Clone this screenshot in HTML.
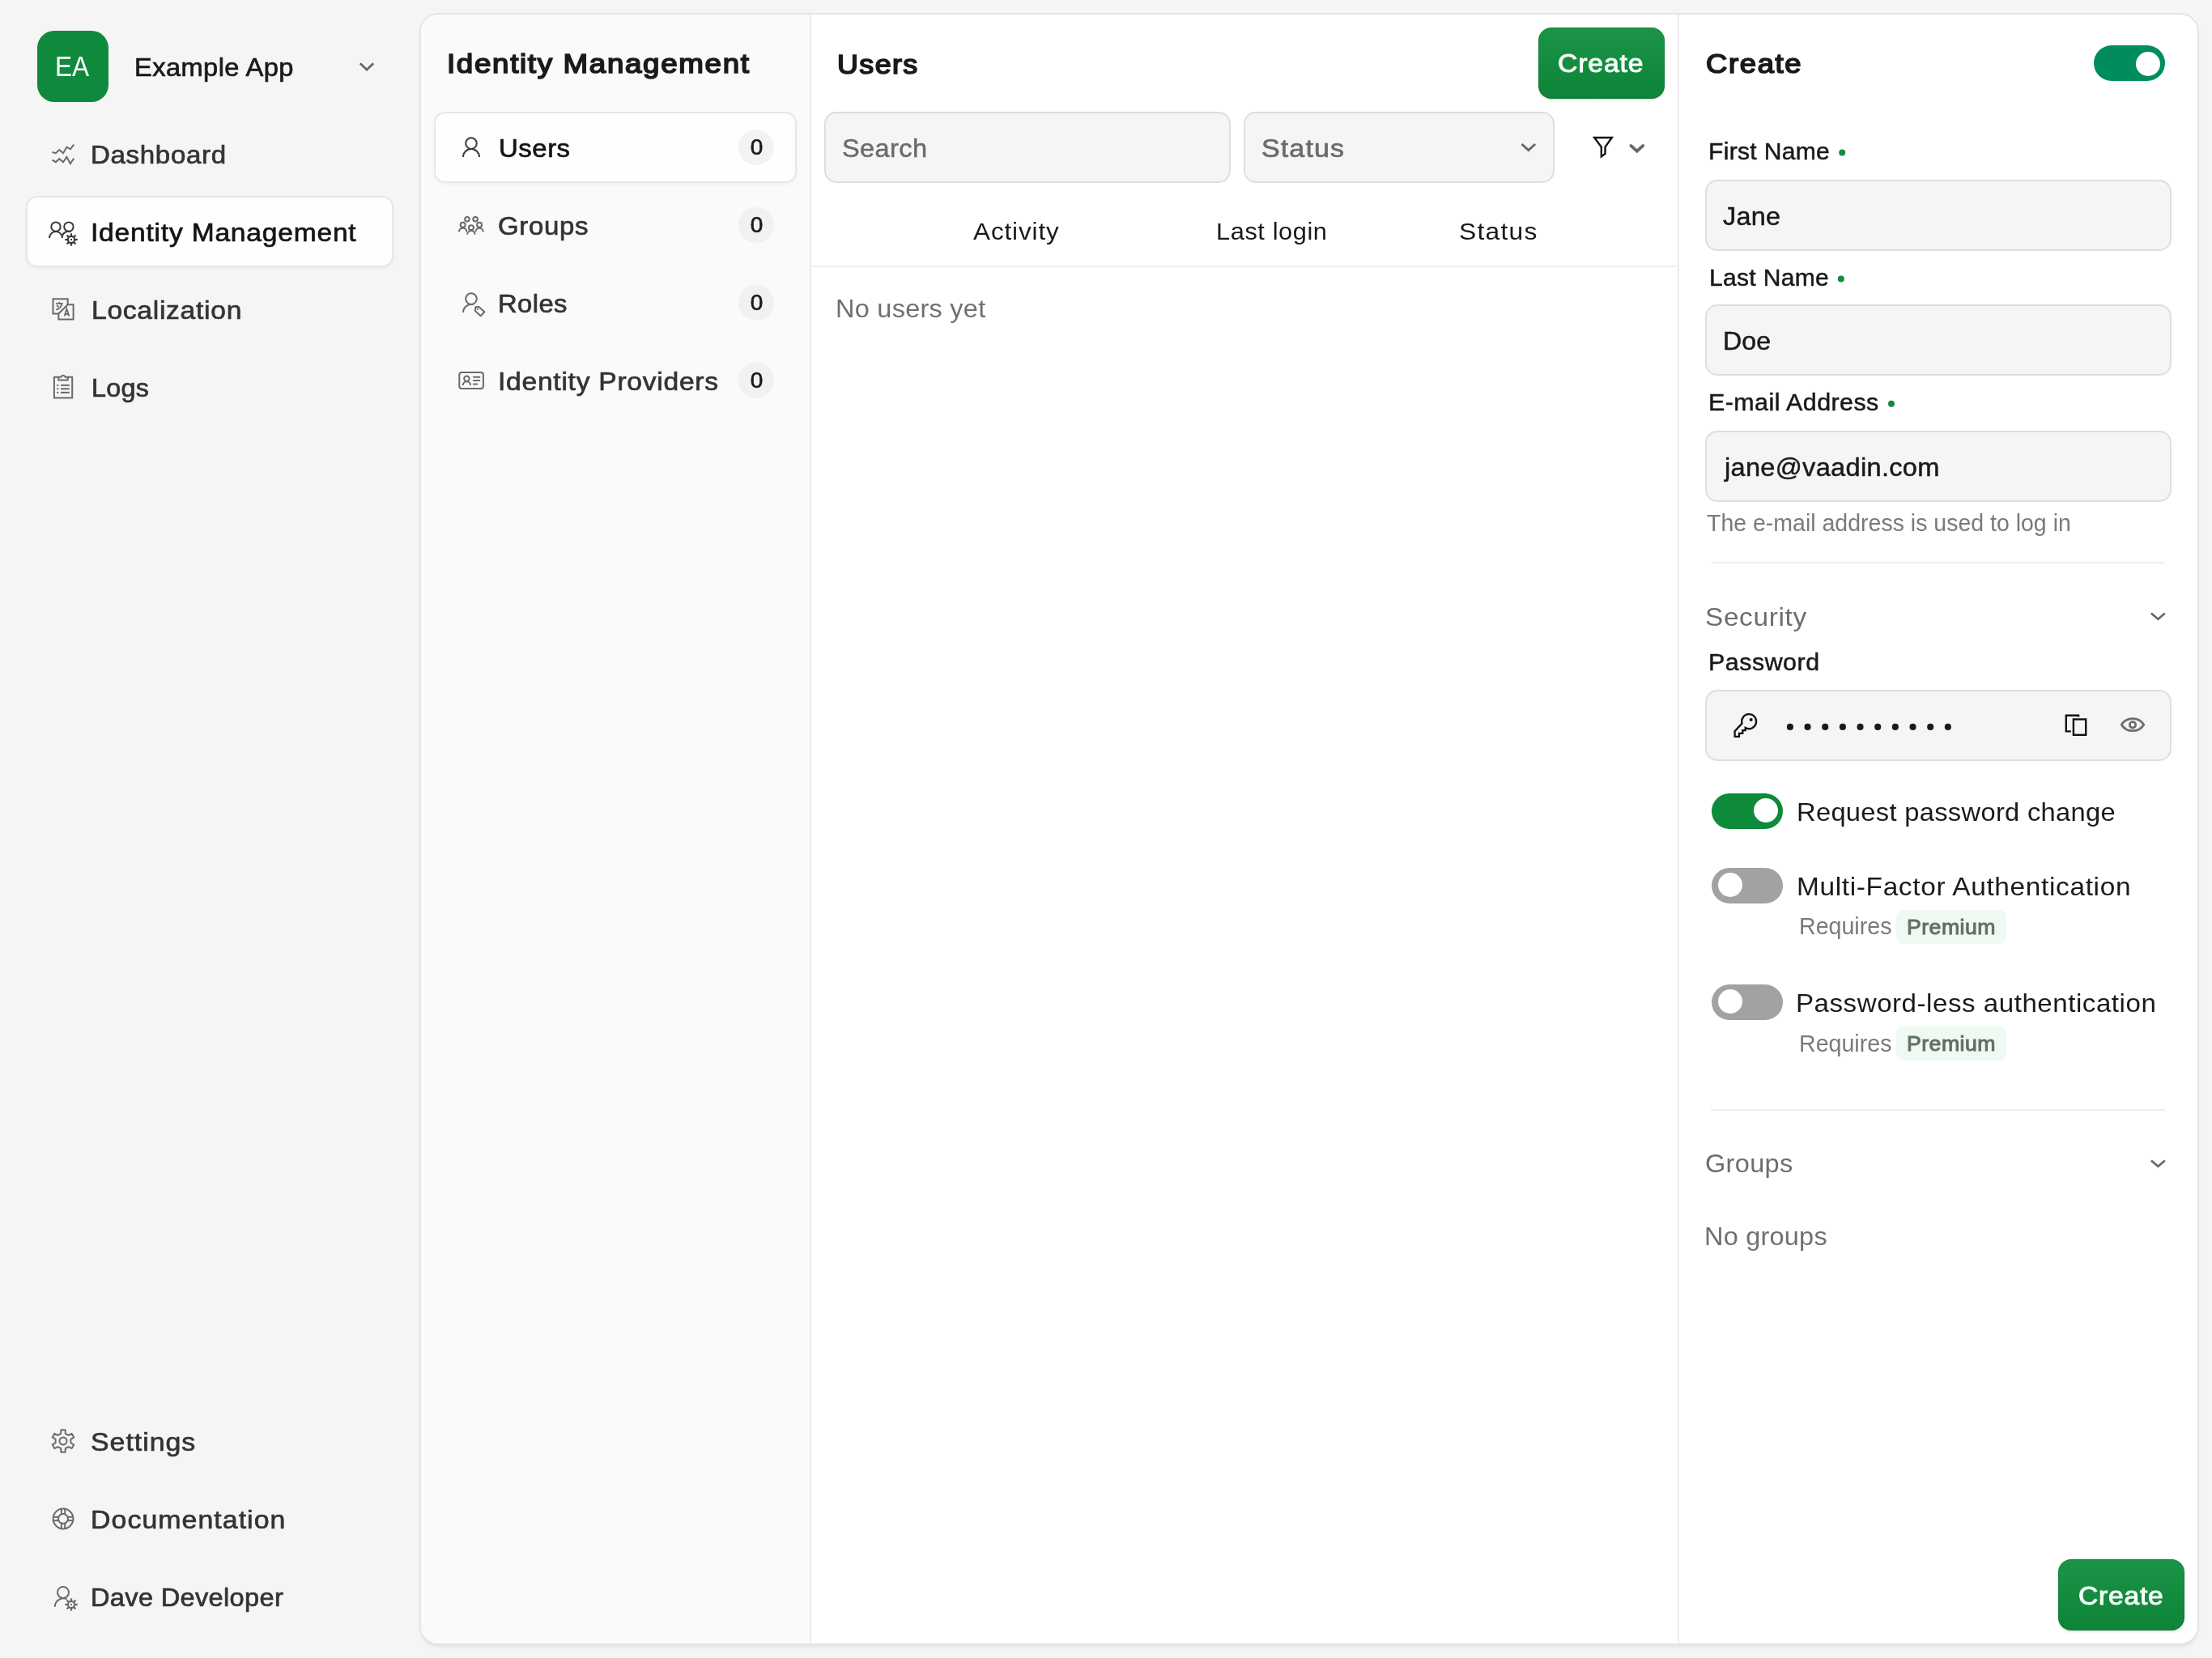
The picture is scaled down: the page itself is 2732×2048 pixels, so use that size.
<!DOCTYPE html>
<html lang="en"><head><meta charset="utf-8"><title>Identity Management – Users</title>
<style>
html,body{margin:0;padding:0}
body{width:2732px;height:2048px;overflow:hidden;background:#f5f5f5;position:relative;
 font-family:"Liberation Sans",sans-serif;-webkit-font-smoothing:antialiased}
.txt{position:absolute;left:0;top:0;width:2732px;height:2048px;will-change:transform}
.t{position:absolute;white-space:nowrap;transform-origin:0 50%;line-height:48px;height:48px;font-kerning:normal}
.sw{-webkit-text-stroke:0.7px currentColor}
.sl{-webkit-text-stroke:0.5px currentColor}
.sb{-webkit-text-stroke:1.0px currentColor}
.sbb{-webkit-text-stroke:1.0px currentColor}
.st{-webkit-text-stroke:1.7px currentColor}
.abs{position:absolute;box-sizing:border-box}
.main{left:518px;top:16px;width:2198px;height:2016px;background:#fff;border:2px solid #e4e4e4;border-radius:23px;
 box-shadow:0 4px 5px -2px rgba(0,0,0,.09);overflow:hidden}
.subnav{left:0;top:0;width:482px;height:2012px;background:#fafafa;border-right:2px solid #ebebeb}
.vdiv{width:2px;background:#ebebeb}
.hdiv{height:2px;background:#eeeeee}
.sel{background:#fefefe;border:2px solid #e7e7e7;border-radius:14px;box-shadow:0 2px 4px rgba(0,0,0,.04)}
.badge{width:44px;height:44px;border-radius:22px;background:#f1f1f1}
.inp{background:#f5f5f5;border:2px solid #dedede;border-radius:15px}
.btn{border-radius:16px;background:linear-gradient(#1b9447,#0d8437);box-shadow:0 2px 3px rgba(0,0,0,.10), inset 0 0 0 1px rgba(0,60,20,.16)}
.tog{width:88px;height:44px;border-radius:22px}
.knob{width:30px;height:30px;border-radius:15px;background:#fff}
.prem{background:#eff8f1;border-radius:9px}
svg{position:absolute;left:0;top:0}
</style></head>
<body>
<div class="abs " style="left:46px;top:38px;width:88px;height:88px;background:#0f8a3c;border-radius:21px;"></div>
<div class="abs sel" style="left:32px;top:242px;width:454px;height:88px;"></div>
<div class="abs main"><div class="abs subnav"></div></div>
<div class="abs sel" style="left:536px;top:138px;width:448px;height:88px;"></div>
<div class="abs badge" style="left:912px;top:159.5px;background:#f3f3f3;"></div>
<div class="abs badge" style="left:912px;top:255.5px;background:#f1f1f1;"></div>
<div class="abs badge" style="left:912px;top:351.5px;background:#f1f1f1;"></div>
<div class="abs badge" style="left:912px;top:447.5px;background:#f1f1f1;"></div>
<div class="abs vdiv" style="left:2072px;top:18px;width:2px;height:2012px;"></div>
<div class="abs btn" style="left:1900px;top:34px;width:156px;height:88px;"></div>
<div class="abs inp" style="left:1018px;top:138px;width:502px;height:88px;"></div>
<div class="abs inp" style="left:1536px;top:138px;width:384px;height:88px;"></div>
<div class="abs hdiv" style="left:1002px;top:328px;width:1070px;height:2px;"></div>
<div class="abs tog" style="left:2586px;top:56px;background:#008c5f;"></div>
<div class="abs knob" style="left:2638px;top:64px;"></div>
<div class="abs inp" style="left:2106px;top:222px;width:576px;height:88px;"></div>
<div class="abs inp" style="left:2106px;top:376px;width:576px;height:88px;"></div>
<div class="abs inp" style="left:2106px;top:532px;width:576px;height:88px;"></div>
<div class="abs hdiv" style="left:2113px;top:694px;width:561px;height:2px;"></div>
<div class="abs inp" style="left:2106px;top:852px;width:576px;height:88px;"></div>
<div class="abs tog" style="left:2114px;top:980px;background:#0d8a3a;"></div>
<div class="abs knob" style="left:2166px;top:986px;"></div>
<div class="abs tog" style="left:2114px;top:1072px;background:#a2a2a2;"></div>
<div class="abs knob" style="left:2122px;top:1078px;"></div>
<div class="abs prem" style="left:2342px;top:1124px;width:136px;height:42px;"></div>
<div class="abs tog" style="left:2114px;top:1216px;background:#a2a2a2;"></div>
<div class="abs knob" style="left:2122px;top:1222px;"></div>
<div class="abs prem" style="left:2342px;top:1268.4px;width:136px;height:42px;"></div>
<div class="abs hdiv" style="left:2113px;top:1370px;width:561px;height:2px;"></div>
<div class="abs btn" style="left:2542px;top:1926px;width:156px;height:88px;"></div>
<svg width="2732" height="2048" viewBox="0 0 2732 2048">
<polyline points="64.5,188.0 68.8,189.2 73.3,185.0 78.0,189.2 82.4,181.7 86.9,184.3 91.2,178.6" fill="none" stroke="#6a6a6a" stroke-width="2" stroke-linejoin="miter"/>
<polyline points="64.5,197.6 68.8,200.2 73.3,196.2 78.0,200.3 82.4,194.0 86.9,202.0 91.2,195.6" fill="none" stroke="#6a6a6a" stroke-width="2" stroke-linejoin="miter"/>
<circle cx="69" cy="280.1" r="5.7" fill="none" stroke="#3a3a3a" stroke-width="2"/>
<circle cx="84.9" cy="280.1" r="5.7" fill="none" stroke="#3a3a3a" stroke-width="2"/>
<path d="M61,294 A8,8 0 0 1 77,294" fill="none" stroke="#3a3a3a" stroke-width="2"/>
<path d="M76.9,291.2 A8,8 0 0 1 87.5,286.4" fill="none" stroke="#3a3a3a" stroke-width="2"/>
<circle cx="88.0" cy="296.0" r="4.1" fill="none" stroke="#3a3a3a" stroke-width="2.1"/><rect x="87.0" y="295.0" width="2" height="2" fill="#3a3a3a"/><line x1="92.60" y1="296.00" x2="95.70" y2="296.00" stroke="#3a3a3a" stroke-width="2.2"/><line x1="91.25" y1="299.25" x2="93.44" y2="301.44" stroke="#3a3a3a" stroke-width="2.2"/><line x1="88.00" y1="300.60" x2="88.00" y2="303.70" stroke="#3a3a3a" stroke-width="2.2"/><line x1="84.75" y1="299.25" x2="82.56" y2="301.44" stroke="#3a3a3a" stroke-width="2.2"/><line x1="83.40" y1="296.00" x2="80.30" y2="296.00" stroke="#3a3a3a" stroke-width="2.2"/><line x1="84.75" y1="292.75" x2="82.56" y2="290.56" stroke="#3a3a3a" stroke-width="2.2"/><line x1="88.00" y1="291.40" x2="88.00" y2="288.30" stroke="#3a3a3a" stroke-width="2.2"/><line x1="91.25" y1="292.75" x2="93.44" y2="290.56" stroke="#3a3a3a" stroke-width="2.2"/>
<path d="M65.5,369.3 H83.7 V376.2 H90.6 V394.4 H72.3 V387.5 H65.5 Z" fill="none" stroke="#6a6a6a" stroke-width="2"/>
<path d="M83.7,376.2 L72.3,387.5" fill="none" stroke="#6a6a6a" stroke-width="2"/>
<path d="M79.6,390.6 L82.4,381.4 L85.4,390.6 M80.6,388 H84.4" fill="none" stroke="#6a6a6a" stroke-width="1.8"/>
<path d="M69.2,374.8 H77.8 M73.4,373 V374.8 M70,377 L72.5,379.2 M76.3,375 C76,379 73,381.6 69.2,382.6" fill="none" stroke="#6a6a6a" stroke-width="1.8"/>
<path d="M72.3,465.8 H66.9 V491.5 H89.2 V465.8 H83.7" fill="none" stroke="#6a6a6a" stroke-width="2"/>
<path d="M72.3,465.8 V469.6 H83.7 V465.8 H80.6 A2.7,2.7 0 0 0 75.4,465.8 Z" fill="none" stroke="#6a6a6a" stroke-width="2"/>
<rect x="70.2" y="474.9" width="2" height="2" fill="#6a6a6a"/>
<line x1="75" y1="475.9" x2="85.8" y2="475.9" stroke="#6a6a6a" stroke-width="2"/>
<rect x="70.2" y="479.3" width="2" height="2" fill="#6a6a6a"/>
<line x1="75" y1="480.3" x2="85.8" y2="480.3" stroke="#6a6a6a" stroke-width="2"/>
<rect x="70.2" y="483.9" width="2" height="2" fill="#6a6a6a"/>
<line x1="75" y1="484.9" x2="85.8" y2="484.9" stroke="#6a6a6a" stroke-width="2"/>
<path d="M75.16,1770.83 L75.42,1766.24 L80.58,1766.24 L80.84,1770.83 L84.52,1772.96 L88.63,1770.89 L91.21,1775.35 L87.36,1777.87 L87.36,1782.13 L91.21,1784.65 L88.63,1789.11 L84.52,1787.04 L80.84,1789.17 L80.58,1793.76 L75.42,1793.76 L75.16,1789.17 L71.48,1787.04 L67.37,1789.11 L64.79,1784.65 L68.64,1782.13 L68.64,1777.87 L64.79,1775.35 L67.37,1770.89 L71.48,1772.96Z" fill="none" stroke="#6a6a6a" stroke-width="2" stroke-linejoin="round"/><circle cx="78.0" cy="1780.0" r="4.5" fill="none" stroke="#6a6a6a" stroke-width="2"/>
<circle cx="78.0" cy="1876.0" r="12.4" fill="none" stroke="#6a6a6a" stroke-width="2"/>
<circle cx="78.0" cy="1876.0" r="6" fill="none" stroke="#6a6a6a" stroke-width="2"/>
<line x1="75.8" y1="1863.8" x2="75.8" y2="1870.4" stroke="#6a6a6a" stroke-width="2"/>
<line x1="75.8" y1="1881.6" x2="75.8" y2="1888.2" stroke="#6a6a6a" stroke-width="2"/>
<line y1="1873.8" x1="65.8" y2="1873.8" x2="72.4" stroke="#6a6a6a" stroke-width="2"/>
<line y1="1873.8" x1="83.6" y2="1873.8" x2="90.2" stroke="#6a6a6a" stroke-width="2"/>
<line x1="80.2" y1="1863.8" x2="80.2" y2="1870.4" stroke="#6a6a6a" stroke-width="2"/>
<line x1="80.2" y1="1881.6" x2="80.2" y2="1888.2" stroke="#6a6a6a" stroke-width="2"/>
<line y1="1878.2" x1="65.8" y2="1878.2" x2="72.4" stroke="#6a6a6a" stroke-width="2"/>
<line y1="1878.2" x1="83.6" y2="1878.2" x2="90.2" stroke="#6a6a6a" stroke-width="2"/>
<circle cx="78" cy="1967.1" r="7" fill="none" stroke="#6a6a6a" stroke-width="2"/>
<path d="M67.8,1984.8 A10.3,10.3 0 0 1 82.5,1975.4" fill="none" stroke="#6a6a6a" stroke-width="2"/>
<circle cx="88.0" cy="1982.0" r="4.1" fill="none" stroke="#6a6a6a" stroke-width="2.1"/><rect x="87.0" y="1981.0" width="2" height="2" fill="#6a6a6a"/><line x1="92.60" y1="1982.00" x2="95.70" y2="1982.00" stroke="#6a6a6a" stroke-width="2.2"/><line x1="91.25" y1="1985.25" x2="93.44" y2="1987.44" stroke="#6a6a6a" stroke-width="2.2"/><line x1="88.00" y1="1986.60" x2="88.00" y2="1989.70" stroke="#6a6a6a" stroke-width="2.2"/><line x1="84.75" y1="1985.25" x2="82.56" y2="1987.44" stroke="#6a6a6a" stroke-width="2.2"/><line x1="83.40" y1="1982.00" x2="80.30" y2="1982.00" stroke="#6a6a6a" stroke-width="2.2"/><line x1="84.75" y1="1978.75" x2="82.56" y2="1976.56" stroke="#6a6a6a" stroke-width="2.2"/><line x1="88.00" y1="1977.40" x2="88.00" y2="1974.30" stroke="#6a6a6a" stroke-width="2.2"/><line x1="91.25" y1="1978.75" x2="93.44" y2="1976.56" stroke="#6a6a6a" stroke-width="2.2"/>
<path d="M444.80,78.30 L453.00,86.10 L461.20,78.30" fill="none" stroke="#666" stroke-width="2.7" stroke-linecap="butt" stroke-linejoin="miter"/>
<circle cx="582" cy="177.1" r="6.8" fill="none" stroke="#3a3a3a" stroke-width="2"/>
<path d="M572,194 A10,10 0 0 1 592,194" fill="none" stroke="#3a3a3a" stroke-width="2"/>
<circle cx="577.0" cy="270.8" r="2.8" fill="none" stroke="#6a6a6a" stroke-width="2"/>
<circle cx="587.1" cy="270.8" r="2.8" fill="none" stroke="#6a6a6a" stroke-width="2"/>
<circle cx="571.7" cy="277.8" r="3" fill="none" stroke="#6a6a6a" stroke-width="2"/>
<path d="M567.0,286.4 A4.7,4.7 0 0 1 576.4000000000001,286.4" fill="none" stroke="#6a6a6a" stroke-width="2"/>
<circle cx="592.1" cy="277.8" r="3" fill="none" stroke="#6a6a6a" stroke-width="2"/>
<path d="M587.4,286.4 A4.7,4.7 0 0 1 596.8000000000001,286.4" fill="none" stroke="#6a6a6a" stroke-width="2"/>
<circle cx="581.9" cy="281.3" r="3" fill="none" stroke="#6a6a6a" stroke-width="2"/>
<path d="M577.1999999999999,289.8 A4.7,4.7 0 0 1 586.6,289.8" fill="none" stroke="#6a6a6a" stroke-width="2"/>
<circle cx="582" cy="369.1" r="6.8" fill="none" stroke="#6a6a6a" stroke-width="2"/>
<path d="M572,386 A10,10 0 0 1 584.6,376.4" fill="none" stroke="#6a6a6a" stroke-width="2"/>
<path d="M587.3,379.3 L591.5,379.1 L598.4,385.3 L593.7,390.3 L586.8,383.9 Z" fill="none" stroke="#6a6a6a" stroke-width="2" stroke-linejoin="round"/>
<circle cx="589.8" cy="381.9" r="1.1" fill="#6a6a6a"/>
<rect x="567.3" y="460" width="29.6" height="20.1" rx="3" fill="none" stroke="#6a6a6a" stroke-width="2"/>
<circle cx="576.4" cy="467.8" r="3.2" fill="none" stroke="#6a6a6a" stroke-width="2"/>
<path d="M571.7,476 A4.7,4.7 0 0 1 581.1,476" fill="none" stroke="#6a6a6a" stroke-width="2"/>
<line x1="584.9" y1="465.7" x2="592.4" y2="465.7" stroke="#6a6a6a" stroke-width="2" stroke-linecap="round"/>
<line x1="584.9" y1="470.1" x2="592.4" y2="470.1" stroke="#6a6a6a" stroke-width="2" stroke-linecap="round"/>
<line x1="584.9" y1="474.4" x2="589.3" y2="474.4" stroke="#6a6a6a" stroke-width="2" stroke-linecap="round"/>
<path d="M1879.50,178.00 L1887.80,185.60 L1896.10,178.00" fill="none" stroke="#666" stroke-width="2.8" stroke-linecap="butt" stroke-linejoin="miter"/>
<path d="M1969.2,170 H1990.8 L1982.5,181.6 V190 L1977.8,193.4 V181.6 Z" fill="none" stroke="#111" stroke-width="2.4" stroke-linejoin="miter"/>
<path d="M2014.30,179.90 L2021.80,186.70 L2029.30,179.90" fill="none" stroke="#666" stroke-width="3.7" stroke-linecap="round" stroke-linejoin="miter"/>
<path d="M2656.90,757.40 L2665.40,764.80 L2673.90,757.40" fill="none" stroke="#666" stroke-width="2.6" stroke-linecap="butt" stroke-linejoin="miter"/>
<path d="M2656.90,1433.40 L2665.40,1440.80 L2673.90,1433.40" fill="none" stroke="#666" stroke-width="2.6" stroke-linecap="butt" stroke-linejoin="miter"/>
<path d="M2151.5,893.6 L2142.6,903.2 V909.9 H2148 V905.8 H2152.3 V902.1 H2155.7 V899 A9,9 0 1 0 2151.5,893.6 Z" fill="none" stroke="#111" stroke-width="2.3" stroke-linejoin="miter"/>
<circle cx="2162.7" cy="889.1" r="2" fill="#111"/>
<circle cx="2210.90" cy="897.9" r="4.05" fill="#1a1a1a"/>
<circle cx="2232.56" cy="897.9" r="4.05" fill="#1a1a1a"/>
<circle cx="2254.22" cy="897.9" r="4.05" fill="#1a1a1a"/>
<circle cx="2275.88" cy="897.9" r="4.05" fill="#1a1a1a"/>
<circle cx="2297.54" cy="897.9" r="4.05" fill="#1a1a1a"/>
<circle cx="2319.20" cy="897.9" r="4.05" fill="#1a1a1a"/>
<circle cx="2340.86" cy="897.9" r="4.05" fill="#1a1a1a"/>
<circle cx="2362.52" cy="897.9" r="4.05" fill="#1a1a1a"/>
<circle cx="2384.18" cy="897.9" r="4.05" fill="#1a1a1a"/>
<circle cx="2405.84" cy="897.9" r="4.05" fill="#1a1a1a"/>
<rect x="2560.9" y="888.5" width="15.3" height="19.3" fill="none" stroke="#111" stroke-width="2.4"/>
<path d="M2557.8,903.4 H2551.8 V883.7 H2567.1 V885.4" fill="none" stroke="#111" stroke-width="2.4"/>
<path d="M2620.2,895.2 C2624,889.3 2629,887.7 2634,887.7 C2639,887.7 2644,889.3 2647.8,895.2 C2644,901.1 2639,902.7 2634,902.7 C2629,902.7 2624,901.1 2620.2,895.2 Z" fill="none" stroke="#6e6e6e" stroke-width="2.8" stroke-linejoin="round"/>
<circle cx="2634" cy="895.3" r="3.7" fill="none" stroke="#6e6e6e" stroke-width="2.8"/>
<circle cx="2275.2" cy="188.6" r="4" fill="#158a3e"/>
<circle cx="2273.8" cy="344.6" r="4" fill="#158a3e"/>
<circle cx="2336" cy="498.7" r="4" fill="#158a3e"/>
</svg>
<div class="txt">
<span class="t" id="ea" style="left:67.73px;top:57.80px;font-size:35px;color:#ffffff;transform:scaleX(0.9018);">EA</span>
<span class="t sw" id="appname" style="left:166.10px;top:58.50px;font-size:32px;color:#1a1a1a;letter-spacing:0.378px;transform:scaleX(1.0214);">Example App</span>
<span class="t sw" id="n_dash" style="left:112.08px;top:166.70px;font-size:32px;color:#333333;letter-spacing:0.632px;transform:scaleX(1.0339);">Dashboard</span>
<span class="t sw" id="n_idm" style="left:111.60px;top:262.60px;font-size:32px;color:#141414;letter-spacing:0.758px;transform:scaleX(1.0486);">Identity Management</span>
<span class="t sw" id="n_loc" style="left:113.08px;top:358.60px;font-size:32px;color:#333333;letter-spacing:0.686px;transform:scaleX(1.0499);">Localization</span>
<span class="t sw" id="n_logs" style="left:113.16px;top:454.60px;font-size:32px;color:#333333;letter-spacing:0.242px;transform:scaleX(1.0122);">Logs</span>
<span class="t sw" id="n_set" style="left:112.20px;top:1756.60px;font-size:32px;color:#333333;letter-spacing:0.908px;transform:scaleX(1.0599);">Settings</span>
<span class="t sw" id="n_doc" style="left:112.08px;top:1852.60px;font-size:32px;color:#333333;letter-spacing:0.995px;transform:scaleX(1.0583);">Documentation</span>
<span class="t sw" id="n_dave" style="left:112.10px;top:1948.60px;font-size:32px;color:#333333;letter-spacing:0.299px;transform:scaleX(1.0189);">Dave Developer</span>
<span class="t st" id="t_idm" style="left:552.07px;top:55.30px;font-size:33.5px;color:#1a1a1a;letter-spacing:1.504px;transform:scaleX(1.0971);">Identity Management</span>
<span class="t sw" id="s_users" style="left:615.65px;top:158.50px;font-size:32px;color:#141414;letter-spacing:0.499px;transform:scaleX(1.0296);">Users</span>
<span class="t sw" id="s_groups" style="left:615.10px;top:254.50px;font-size:32px;color:#333333;letter-spacing:0.644px;transform:scaleX(1.0307);">Groups</span>
<span class="t sw" id="s_roles" style="left:615.10px;top:350.50px;font-size:32px;color:#333333;letter-spacing:0.392px;transform:scaleX(1.0241);">Roles</span>
<span class="t sw" id="s_idp" style="left:614.60px;top:446.50px;font-size:32px;color:#333333;letter-spacing:0.697px;transform:scaleX(1.0503);">Identity Providers</span>
<span class="t sw" id="b0" style="left:926.76px;top:157.80px;font-size:28px;color:#1a1a1a;">0</span>
<span class="t sw" id="b1" style="left:926.76px;top:253.80px;font-size:28px;color:#1a1a1a;">0</span>
<span class="t sw" id="b2" style="left:926.76px;top:349.80px;font-size:28px;color:#1a1a1a;">0</span>
<span class="t sw" id="b3" style="left:926.76px;top:445.80px;font-size:28px;color:#1a1a1a;">0</span>
<span class="t st" id="t_users" style="left:1034.07px;top:55.50px;font-size:33.5px;color:#1a1a1a;letter-spacing:1.346px;transform:scaleX(1.0689);">Users</span>
<span class="t sbb" id="btn1" style="left:1924.22px;top:54.00px;font-size:32px;color:#f5fff7;letter-spacing:0.858px;transform:scaleX(1.0513);">Create</span>
<span class="t sl" id="search" style="left:1040.08px;top:158.80px;font-size:32px;color:#6b6b6b;letter-spacing:0.370px;transform:scaleX(1.0175);">Search</span>
<span class="t sw" id="status" style="left:1558.35px;top:158.50px;font-size:32px;color:#6b6b6b;letter-spacing:1.027px;transform:scaleX(1.0642);">Status</span>
<span class="t" id="h_act" style="left:1202.04px;top:261.60px;font-size:29.5px;color:#1a1a1a;letter-spacing:0.816px;transform:scaleX(1.0675);">Activity</span>
<span class="t" id="h_last" style="left:1502.26px;top:261.60px;font-size:29.5px;color:#1a1a1a;letter-spacing:0.568px;transform:scaleX(1.0425);">Last login</span>
<span class="t" id="h_status" style="left:1801.95px;top:261.60px;font-size:29.5px;color:#1a1a1a;letter-spacing:1.168px;transform:scaleX(1.0767);">Status</span>
<span class="t" id="nousers" style="left:1032.34px;top:356.50px;font-size:32px;color:#707070;letter-spacing:0.256px;transform:scaleX(1.0150);">No users yet</span>
<span class="t st" id="t_create" style="left:2106.86px;top:55.20px;font-size:33.5px;color:#1a1a1a;letter-spacing:1.545px;transform:scaleX(1.0861);">Create</span>
<span class="t sl" id="l_first" style="left:2110.38px;top:163.40px;font-size:29.5px;color:#1a1a1a;letter-spacing:0.311px;transform:scaleX(1.0188);">First Name</span>
<span class="t sl" id="v_first" style="left:2128.36px;top:242.70px;font-size:32px;color:#1a1a1a;letter-spacing:0.219px;transform:scaleX(1.0138);">Jane</span>
<span class="t sl" id="l_last" style="left:2110.64px;top:319.40px;font-size:29.5px;color:#1a1a1a;letter-spacing:0.329px;transform:scaleX(1.0165);">Last Name</span>
<span class="t sl" id="v_last" style="left:2128.46px;top:396.60px;font-size:32px;color:#1a1a1a;letter-spacing:0.017px;transform:scaleX(1.0053);">Doe</span>
<span class="t sl" id="l_email" style="left:2110.36px;top:473.20px;font-size:29.5px;color:#1a1a1a;letter-spacing:0.447px;transform:scaleX(1.0300);">E-mail Address</span>
<span class="t sl" id="v_email" style="left:2129.74px;top:552.50px;font-size:32px;color:#1a1a1a;letter-spacing:0.304px;transform:scaleX(1.0171);">jane@vaadin.com</span>
<span class="t" id="helper" style="left:2108.32px;top:622.20px;font-size:29px;color:#7a7a7a;transform:scaleX(0.9826);">The e-mail address is used to log in</span>
<span class="t" id="h_sec" style="left:2106.42px;top:737.60px;font-size:32px;color:#6e6e6e;letter-spacing:0.641px;transform:scaleX(1.0419);">Security</span>
<span class="t sl" id="l_pw" style="left:2110.36px;top:793.50px;font-size:29.5px;color:#1a1a1a;letter-spacing:0.529px;transform:scaleX(1.0286);">Password</span>
<span class="t" id="sw1" style="left:2218.60px;top:978.70px;font-size:32px;color:#1a1a1a;letter-spacing:0.316px;transform:scaleX(1.0203);">Request password change</span>
<span class="t" id="sw2" style="left:2218.99px;top:1070.60px;font-size:32px;color:#1a1a1a;letter-spacing:0.616px;transform:scaleX(1.0446);">Multi-Factor Authentication</span>
<span class="t" id="req1" style="left:2222.19px;top:1120.30px;font-size:29px;color:#7a7a7a;transform:scaleX(0.9860);">Requires</span>
<span class="t sb" id="prem1" style="left:2354.97px;top:1121.00px;font-size:26px;color:#626f67;letter-spacing:0.461px;transform:scaleX(1.0251);">Premium</span>
<span class="t" id="sw3" style="left:2218.12px;top:1214.80px;font-size:32px;color:#1a1a1a;letter-spacing:0.519px;transform:scaleX(1.0339);">Password-less authentication</span>
<span class="t" id="req2" style="left:2222.19px;top:1265.00px;font-size:29px;color:#7a7a7a;transform:scaleX(0.9860);">Requires</span>
<span class="t sb" id="prem2" style="left:2354.97px;top:1265.20px;font-size:26px;color:#626f67;letter-spacing:0.461px;transform:scaleX(1.0251);">Premium</span>
<span class="t" id="h_groups" style="left:2105.82px;top:1413.20px;font-size:32px;color:#6e6e6e;letter-spacing:0.319px;transform:scaleX(1.0157);">Groups</span>
<span class="t" id="nogroups" style="left:2105.01px;top:1502.50px;font-size:32px;color:#707070;letter-spacing:0.216px;transform:scaleX(1.0152);">No groups</span>
<span class="t sbb" id="btn2" style="left:2566.53px;top:1946.50px;font-size:32px;color:#f5fff7;letter-spacing:0.799px;transform:scaleX(1.0468);">Create</span>
</div>
</body></html>
